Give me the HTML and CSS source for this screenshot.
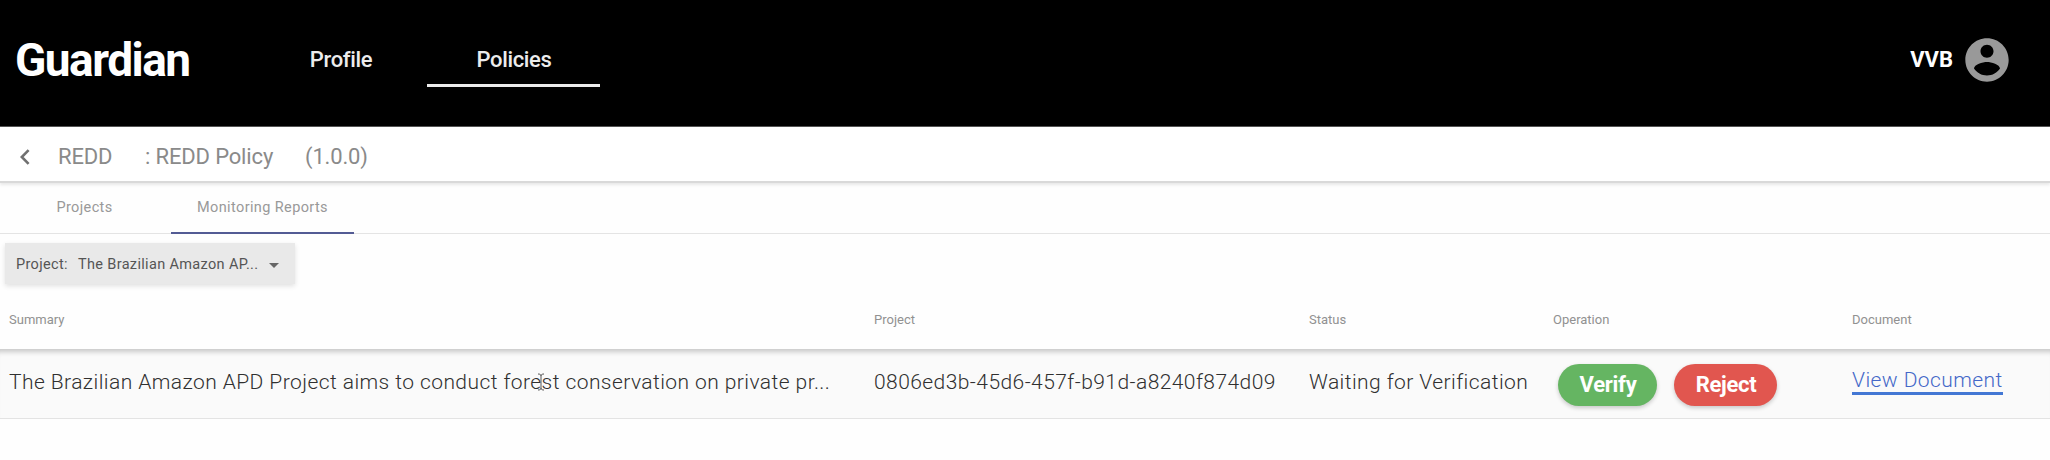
FILE: index.html
```
<!DOCTYPE html>
<html lang="en">
<head>
<meta charset="utf-8">
<title>Guardian</title>
<link rel="stylesheet" href="styles.css">
</head>
<body>
<header class="topbar">
  <div class="brand">Guardian</div>
  <nav class="nav">
    <a class="nav-link">Profile</a>
    <a class="nav-link active">Policies</a>
  </nav>
  <div class="user">
    <span class="user-name">VVB</span>
    <svg class="avatar" viewBox="0 0 24 24"><path d="M12 2C6.48 2 2 6.48 2 12s4.48 10 10 10 10-4.48 10-10S17.52 2 12 2zm0 3c1.66 0 3 1.34 3 3s-1.34 3-3 3-3-1.34-3-3 1.34-3 3-3zm0 14.2c-2.5 0-4.71-1.28-6-3.22.03-1.99 4-3.08 6-3.08 1.99 0 5.97 1.09 6 3.08-1.29 1.94-3.5 3.22-6 3.22z"/></svg>
  </div>
</header>
<div class="crumbs">
  <svg class="back" viewBox="0 0 10 16"><path d="M8.600 1.200 1.800 8l6.800 6.800"/></svg>
  <span class="crumb-tag">REDD</span>
  <span class="crumb-name">: REDD Policy</span>
  <span class="crumb-version">(1.0.0)</span>
</div>
<div class="tabs">
  <div class="tab tab-projects"><span>Projects</span></div>
  <div class="tab tab-reports"><span>Monitoring Reports</span></div>
</div>
<div class="filter">
  <div class="select">
    <span class="select-label">Project:</span>
    <span class="select-value">The Brazilian Amazon AP...</span>
    <svg class="caret" viewBox="0 0 10 5"><path d="M0 0h10L5 5z"/></svg>
  </div>
</div>
<div class="grid grid-head">
  <span>Summary</span><span>Project</span><span>Status</span><span>Operation</span><span>Document</span>
</div>
<div class="grid grid-row">
  <span class="summary">The Brazilian Amazon APD Project aims to conduct forest conservation on private pr...
    <svg class="ibeam" viewBox="0 0 8 18"><path d="M1 1c2 0 3 .5 3 2v12c0 1.500-1 2-3 2M7 1C5 1 4 1.500 4 3M7 17c-2 0-3-.5-3-2"/></svg>
  </span>
  <span class="uuid">0806ed3b-45d6-457f-b91d-a8240f874d09</span>
  <span class="status">Waiting for Verification</span>
  <div class="actions">
    <button class="btn verify">Verify</button>
    <button class="btn reject">Reject</button>
  </div>
  <div><a class="doc">View Document</a></div>
</div>
</body>
</html>
```
FILE: styles.css
```
* { box-sizing: border-box; }
body {
  margin: 0;
  width: 2050px;
  height: 460px;
  overflow: hidden;
  background: #fefefe;
  font-family: Roboto, "Liberation Sans", sans-serif;
  color: #303030;
  white-space: nowrap;
}
.topbar {
  display: flex;
  height: 127px;
  background: #000;
  color: #fff;
  border-bottom: 1px solid #555;
}
.brand {
  width: 427px;
  padding: 33px 0 0 15px;
  font-size: 46px;
  line-height: 54px;
  font-weight: 700;
  letter-spacing: -1.5px;
}
.nav { display: flex; margin-left: -173px; }
.nav-link {
  width: 173px;
  height: 87px;
  padding: 47px 0 0 1px;
  font-size: 22px;
  line-height: 26px;
  font-weight: 500;
  letter-spacing: -.35px;
  color: #ececec;
  text-align: center;
}
.nav-link.active { border-bottom: 3px solid #ececec; }
.user { display: flex; margin-left: auto; padding: 34px 37px 0 0; }
.user-name { padding-top: 13px; font-size: 22px; line-height: 26px; font-weight: 700; margin-right: 8px; }
.avatar { width: 52px; height: 52px; fill: #999; }
.crumbs {
  display: flex;
  align-items: flex-start;
  height: 56px;
  padding: 17px 0 0 20px;
  background: #fff;
  font-size: 22px;
  line-height: 26px;
  letter-spacing: -.15px;
  color: #8a8a8a;
  border-bottom: 2px solid #d9d9d9;
  box-shadow: 0 2px 3px rgba(0, 0, 0, .09);
}
.back { width: 10px; height: 16px; margin: 5px 28px 0 0; fill: none; stroke: #707070; stroke-width: 2.6; }
.crumb-tag { width: 87px; }
.crumb-name { width: 160px; }
.tabs {
  display: flex;
  height: 51px;
  border-bottom: 1px solid #e4e4e4;
  font-size: 14.5px;
  line-height: 18px;
  letter-spacing: .38px;
  color: #999;
}
.tab { height: 51px; padding-top: 16px; text-align: center; }
.tab-projects { width: 171px; padding-right: 2px; }
.tab-reports { width: 183px; border-bottom: 2px solid #535b94; }
.filter { height: 58px; padding: 9px 0 0 5px; }
.select {
  display: flex;
  width: 290px;
  height: 41px;
  padding: 13px 0 0 11px;
  background: #e9e9e9;
  box-shadow: 0 2px 5px rgba(0, 0, 0, .12);
  font-size: 14.5px;
  line-height: 18px;
  letter-spacing: .34px;
  color: #555;
}
.select-label { width: 62px; }
.select-value { width: 191px; }
.caret { width: 10px; height: 5px; margin-top: 7px; fill: #666; }
.grid {
  display: grid;
  grid-template-columns: 865px 435px 244px 299px 1fr;
  padding-left: 9px;
}
.grid-head {
  height: 57px;
  padding-top: 20px;
  font-size: 13px;
  line-height: 16px;
  color: #919191;
}
.grid-row {
  height: 70px;
  background: #fafafa;
  border-bottom: 1px solid #e3e3e3;
  box-shadow: inset 0 7px 5px -4px rgba(0, 0, 0, .2);
  font-size: 21px;
  line-height: 26px;
  font-weight: 300;
  letter-spacing: .43px;
}
.grid-row > span { padding-top: 20px; }
.summary { position: relative; }
.ibeam { position: absolute; left: 528px; top: 24px; width: 8px; height: 18px; fill: none; stroke: #555; stroke-width: 1; }
.actions { display: flex; gap: 17px; padding: 15px 0 0 5px; }
.btn {
  height: 42px;
  padding: 0 0 0 1px;
  border: 0;
  border-radius: 21px;
  color: #fff;
  font: 700 22px/42px Roboto, "Liberation Sans", sans-serif;
  letter-spacing: -.3px;
  box-shadow: 0 2px 4px rgba(0, 0, 0, .2);
}
.verify { width: 99px; background: #65b562; }
.reject { width: 103px; background: #e1564f; }
.doc {
  display: inline-block;
  height: 28px;
  margin-top: 18px;
  border-bottom: 3px solid #4377d4;
  color: #4468c8;
}
```
